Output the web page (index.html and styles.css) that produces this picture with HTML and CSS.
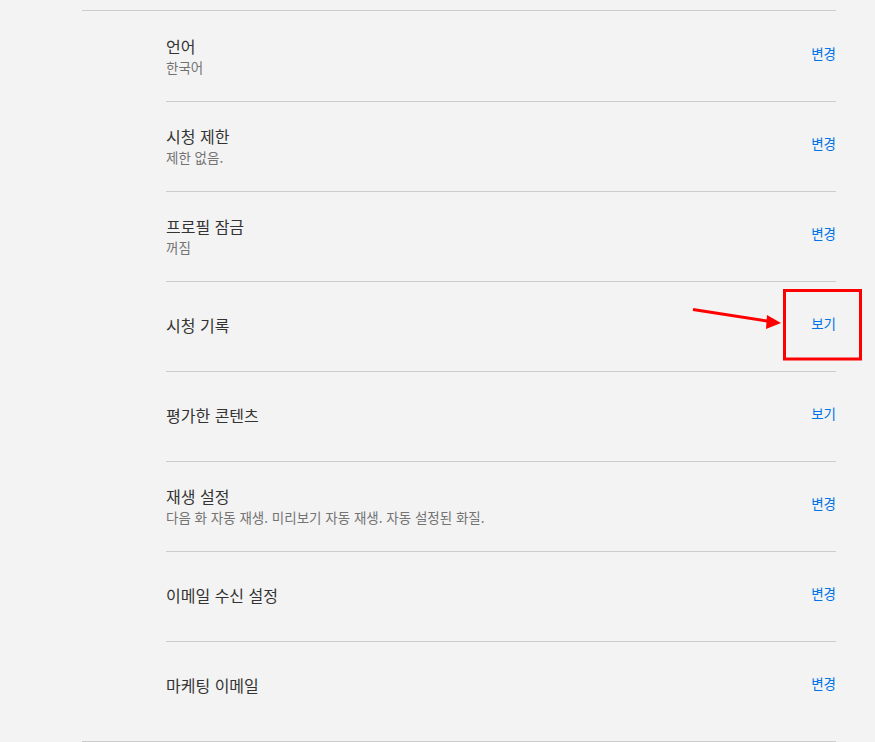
FILE: index.html
```html
<!DOCTYPE html>
<html lang="ko">
<head>
<meta charset="utf-8">
<link rel="stylesheet" href="styles.css">
</head>
<body>
<div class="section">
  <ul class="list">
    <li class="row"><div class="info info-two"><div class="title">언어</div><div class="sub">한국어</div></div><a class="link">변경</a></li>
    <li class="row"><div class="info info-two"><div class="title">시청 제한</div><div class="sub">제한 없음.</div></div><a class="link">변경</a></li>
    <li class="row"><div class="info info-two"><div class="title">프로필 잠금</div><div class="sub">꺼짐</div></div><a class="link">변경</a></li>
    <li class="row"><div class="info"><div class="title">시청 기록</div></div><a class="link">보기</a></li>
    <li class="row"><div class="info"><div class="title">평가한 콘텐츠</div></div><a class="link">보기</a></li>
    <li class="row"><div class="info info-two"><div class="title">재생 설정</div><div class="sub">다음 화 자동 재생. 미리보기 자동 재생. 자동 설정된 화질.</div></div><a class="link">변경</a></li>
    <li class="row"><div class="info"><div class="title">이메일 수신 설정</div></div><a class="link">변경</a></li>
    <li class="row"><div class="info"><div class="title">마케팅 이메일</div></div><a class="link">변경</a></li>
  </ul>
</div>
<svg class="annot" width="875" height="742" viewBox="0 0 875 742">
  <rect x="784.5" y="290.5" width="76" height="68.5" fill="none" stroke="#ff0000" stroke-width="3"/>
  <line x1="693" y1="309.5" x2="770" y2="321.5" stroke="#ff0000" stroke-width="3"/>
  <polygon points="781,323 767,315 766,329" fill="#ff0000"/>
</svg>
</body>
</html>
```
FILE: styles.css
```css
html, body {
  margin: 0;
  padding: 0;
  background: #f3f3f3;
}
body {
  font-family: "Malgun Gothic", "Noto Sans CJK KR", "Noto Sans", sans-serif;
  position: relative;
  width: 875px;
  height: 742px;
  overflow: hidden;
}
.section {
  margin: 10px 0 0 82px;
  width: 754px;
  border-top: 1px solid #cccccc;
  border-bottom: 1px solid #cccccc;
  padding: 1px 0 10px 0;
}
.list {
  list-style: none;
  margin: 0;
  padding: 0 0 0 84px;
}
.row {
  box-sizing: border-box;
  height: 89px;
  padding-bottom: 4px;
  display: flex;
  align-items: center;
  justify-content: space-between;
  border-bottom: 1px solid #cccccc;
}
.row:not(:last-child) {
  height: 90px;
}
.row:last-child {
  border-bottom: none;
}
.info-two {
  margin-top: 2px;
}
.title {
  font-size: 16px;
  line-height: 22px;
  color: #333333;
}
.sub {
  font-size: 13.5px;
  line-height: 20px;
  color: #737373;
}
.link {
  font-size: 13.5px;
  line-height: 18px;
  margin-bottom: 4px;
  color: #0073e6;
  cursor: pointer;
}
.annot {
  position: absolute;
  left: 0;
  top: 0;
  pointer-events: none;
}
```
